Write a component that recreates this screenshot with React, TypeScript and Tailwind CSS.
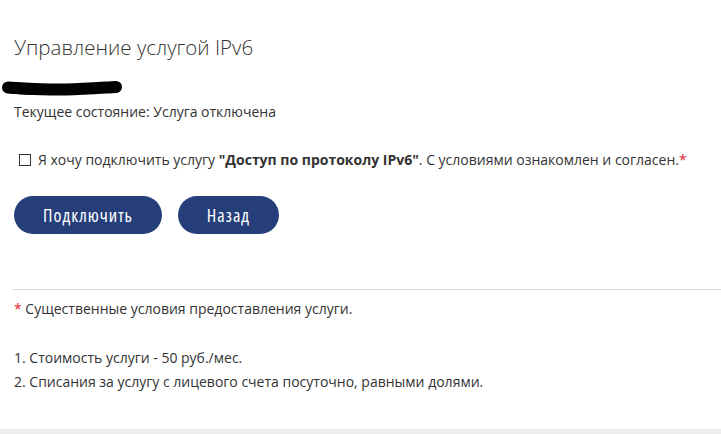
import React from "react";

export default function App() {
  return (
    <div className="w-[721px] h-[434px] bg-white flex flex-col text-[#333]" style={{ fontFamily: '"Open Sans", "Noto Sans", sans-serif' }}>
      <div className="flex-1 flex flex-col">
        <div className="pl-[14px] pt-[33px]">
          <h1 className="text-[20.5px] leading-[28px] font-light text-[#333]">Управление услугой IPv6</h1>
        </div>
        <div className="pl-[1px] mt-[19px] h-[16px]">
          <svg width="124" height="16" viewBox="0 0 124 16">
            <path d="M7 7.5 C 25 8.5, 45 10, 65 9.5 C 85 9, 105 7.5, 115 7" stroke="#000" strokeWidth="12" strokeLinecap="round" fill="none" />
            <path d="M10 10 C 30 12, 50 12, 75 10.5" stroke="#000" strokeWidth="7" strokeLinecap="round" fill="none" />
          </svg>
        </div>
        <div className="pl-[14px] mt-[7px] text-[14px] leading-[18px]">Текущее состояние: Услуга отключена</div>
        <div className="pl-[19px] mt-[30px] flex items-center text-[14px] leading-[18px]">
          <span className="w-[12px] h-[12px] border border-[#333] mr-[7px] shrink-0" />
          <span>
            Я хочу подключить услугу <b className="font-bold">"Доступ по протоколу IPv6"</b>. С условиями ознакомлен и согласен.<span className="text-[#e0262c]">*</span>
          </span>
        </div>
        <div className="pl-[14px] mt-[27px] flex gap-[16px]">
          <button className="w-[148px] h-[38px] rounded-full bg-[#263f7b] text-white text-[18px] font-stretch-condensed tracking-[1px]">Подключить</button>
          <button className="w-[101px] h-[38px] rounded-full bg-[#263f7b] text-white text-[18px] font-stretch-condensed tracking-[1px]">Назад</button>
        </div>
        <div className="ml-[12px] mt-[55px] border-t border-[#dcdcdc]" />
        <div className="pl-[14px] mt-[10px] text-[14px] leading-[18px]">
          <span className="text-[#e0262c]">*</span> Существенные условия предоставления услуги.
        </div>
        <div className="pl-[14px] mt-[28px] text-[14px] leading-[24px]">
          <div>1. Стоимость услуги - 50 руб./мес.</div>
          <div>2. Списания за услугу с лицевого счета посуточно, равными долями.</div>
        </div>
      </div>
      <div className="h-[5px] bg-[#ececec]" />
    </div>
  );
}
